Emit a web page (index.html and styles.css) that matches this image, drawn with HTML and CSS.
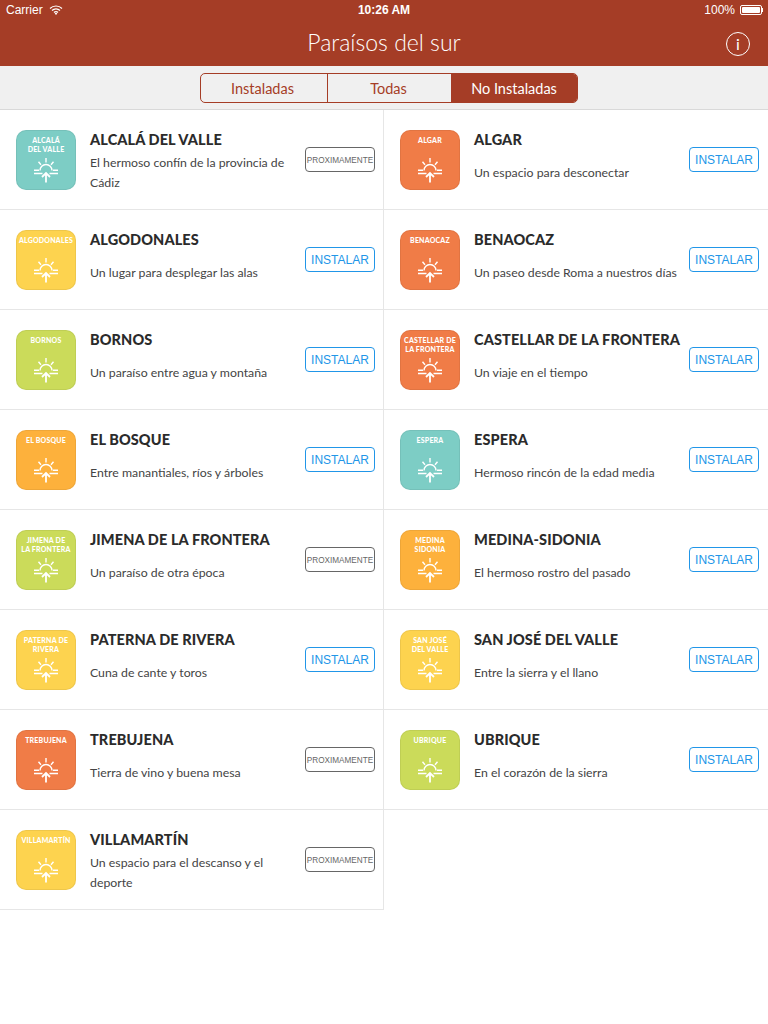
FILE: index.html
```html
<!DOCTYPE html>
<html lang="es">

<head>
    <meta charset="UTF-8">
    <meta name="viewport" content="width=device-width, initial-scale=1.0">
    <title>Paraísos del sur</title>
    <link rel="stylesheet" href="styles.css">
</head>

<body>

    <svg class="defs" width="0" height="0">
        <symbol id="sun" viewBox="0 0 60 60">
            <g fill="none" stroke="#fff" stroke-width="1.4">
                <path d="M24 40.500a6 6 0 0 1 12 0" />
                <path d="M30 28v4.500M22.500 31.800l2.500 3M37.500 31.800l-2.500 3M18 40.300h5M37 40.300h5M18 43.500h8.500M33.500 43.500H42" />
                <path d="M30 52.500V43.500M26 47l4-4 4 4" stroke-width="1.800" />
            </g>
        </symbol>
    </svg>

    <header class="top">
        <div class="status">
            <div class="status-left">
                <span>Carrier</span>
                <svg class="wifi" width="14" height="10" viewBox="0 0 14 10">
                    <path d="M1 3.500a8.500 8.500 0 0 1 12 0M3 5.500a5.600 5.600 0 0 1 8 0M5 7.500a2.800 2.800 0 0 1 4 0" fill="none" stroke="#fff" stroke-width="1.200" />
                    <path d="M7 10L5.700 8.500a1.800 1.800 0 0 1 2.600 0z" fill="#fff" />
                </svg>
            </div>
            <div class="status-time">10:26 AM</div>
            <div class="status-right">
                <span>100%</span>
                <div class="battery"><div class="battery-fill"></div></div>
                <div class="battery-tip"></div>
            </div>
        </div>
        <div class="navbar">
            <h1>Paraísos del sur</h1>
            <div class="info">i</div>
        </div>
    </header>

    <div class="segment-bar">
        <div class="segment">
            <div class="segment-item first">Instaladas</div>
            <div class="segment-item middle">Todas</div>
            <div class="segment-item selected">No Instaladas</div>
        </div>
    </div>

    <div class="list">

        <div class="cell">
            <div class="badge teal"><span>Alcalá<br>del Valle</span><svg><use href="#sun" /></svg></div>
            <div class="text">
                <h2>ALCALÁ DEL VALLE</h2>
                <div class="desc"><p>El hermoso confín de la provincia de Cádiz</p></div>
            </div>
            <div class="btn soon">PROXIMAMENTE</div>
        </div>

        <div class="cell">
            <div class="badge orange"><span>Algar</span><svg><use href="#sun" /></svg></div>
            <div class="text">
                <h2>ALGAR</h2>
                <div class="desc"><p>Un espacio para desconectar</p></div>
            </div>
            <div class="btn">INSTALAR</div>
        </div>

        <div class="cell">
            <div class="badge yellow"><span>Algodonales</span><svg><use href="#sun" /></svg></div>
            <div class="text">
                <h2>ALGODONALES</h2>
                <div class="desc"><p>Un lugar para desplegar las alas</p></div>
            </div>
            <div class="btn">INSTALAR</div>
        </div>

        <div class="cell">
            <div class="badge orange"><span>Benaocaz</span><svg><use href="#sun" /></svg></div>
            <div class="text">
                <h2>BENAOCAZ</h2>
                <div class="desc"><p>Un paseo desde Roma a nuestros días</p></div>
            </div>
            <div class="btn">INSTALAR</div>
        </div>

        <div class="cell">
            <div class="badge green"><span>Bornos</span><svg><use href="#sun" /></svg></div>
            <div class="text">
                <h2>BORNOS</h2>
                <div class="desc"><p>Un paraíso entre agua y montaña</p></div>
            </div>
            <div class="btn">INSTALAR</div>
        </div>

        <div class="cell">
            <div class="badge orange"><span>Castellar de<br>la Frontera</span><svg><use href="#sun" /></svg></div>
            <div class="text">
                <h2>CASTELLAR DE LA FRONTERA</h2>
                <div class="desc"><p>Un viaje en el tiempo</p></div>
            </div>
            <div class="btn">INSTALAR</div>
        </div>

        <div class="cell">
            <div class="badge amber"><span>El Bosque</span><svg><use href="#sun" /></svg></div>
            <div class="text">
                <h2>EL BOSQUE</h2>
                <div class="desc"><p>Entre manantiales, ríos y árboles</p></div>
            </div>
            <div class="btn">INSTALAR</div>
        </div>

        <div class="cell">
            <div class="badge teal"><span>Espera</span><svg><use href="#sun" /></svg></div>
            <div class="text">
                <h2>ESPERA</h2>
                <div class="desc"><p>Hermoso rincón de la edad media</p></div>
            </div>
            <div class="btn">INSTALAR</div>
        </div>

        <div class="cell">
            <div class="badge green"><span>Jimena de<br>la Frontera</span><svg><use href="#sun" /></svg></div>
            <div class="text">
                <h2>JIMENA DE LA FRONTERA</h2>
                <div class="desc"><p>Un paraíso de otra época</p></div>
            </div>
            <div class="btn soon">PROXIMAMENTE</div>
        </div>

        <div class="cell">
            <div class="badge amber"><span>Medina<br>Sidonia</span><svg><use href="#sun" /></svg></div>
            <div class="text">
                <h2>MEDINA-SIDONIA</h2>
                <div class="desc"><p>El hermoso rostro del pasado</p></div>
            </div>
            <div class="btn">INSTALAR</div>
        </div>

        <div class="cell">
            <div class="badge yellow"><span>Paterna de<br>Rivera</span><svg><use href="#sun" /></svg></div>
            <div class="text">
                <h2>PATERNA DE RIVERA</h2>
                <div class="desc"><p>Cuna de cante y toros</p></div>
            </div>
            <div class="btn">INSTALAR</div>
        </div>

        <div class="cell">
            <div class="badge yellow"><span>San José<br>del Valle</span><svg><use href="#sun" /></svg></div>
            <div class="text">
                <h2>SAN JOSÉ DEL VALLE</h2>
                <div class="desc"><p>Entre la sierra y el llano</p></div>
            </div>
            <div class="btn">INSTALAR</div>
        </div>

        <div class="cell">
            <div class="badge orange"><span>Trebujena</span><svg><use href="#sun" /></svg></div>
            <div class="text">
                <h2>TREBUJENA</h2>
                <div class="desc"><p>Tierra de vino y buena mesa</p></div>
            </div>
            <div class="btn soon">PROXIMAMENTE</div>
        </div>

        <div class="cell">
            <div class="badge green"><span>Ubrique</span><svg><use href="#sun" /></svg></div>
            <div class="text">
                <h2>UBRIQUE</h2>
                <div class="desc"><p>En el corazón de la sierra</p></div>
            </div>
            <div class="btn">INSTALAR</div>
        </div>

        <div class="cell">
            <div class="badge yellow"><span>Villamartín</span><svg><use href="#sun" /></svg></div>
            <div class="text">
                <h2>VILLAMARTÍN</h2>
                <div class="desc"><p>Un espacio para el descanso y el deporte</p></div>
            </div>
            <div class="btn soon">PROXIMAMENTE</div>
        </div>

    </div>

</body>

</html>
```

FILE: styles.css
```css
body {
    font-family: 'Lato', sans-serif;
    margin: 0;
    padding: 0;
    background-color: #fff;
    color: #333;
}

.defs {
    display: block;
    height: 0;
}

.top {
    background-color: #a53d26;
    color: #fff;
    height: 66px;
}

.status {
    display: grid;
    grid-template-columns: 1fr auto 1fr;
    align-items: center;
    height: 20px;
    padding: 0 6px;
    font-family: 'Liberation Sans', sans-serif;
    font-size: 12px;
}

.status-left {
    display: flex;
    align-items: center;
    gap: 6px;
}

.status-time {
    font-weight: bold;
}

.status-right {
    display: flex;
    align-items: center;
    justify-content: flex-end;
    margin-right: -1px;
}

.battery {
    width: 22px;
    height: 10px;
    box-sizing: border-box;
    margin-left: 5px;
    padding: 1px;
    border: 1px solid #fff;
    border-radius: 2px;
}

.battery-fill {
    height: 100%;
    background-color: #fff;
    border-radius: 1px;
}

.battery-tip {
    width: 1px;
    height: 4px;
    background-color: #fff;
}

.navbar {
    display: flex;
    align-items: center;
    justify-content: center;
    position: relative;
    height: 46px;
}

.navbar h1 {
    margin: 0 0 2px;
    font-size: 23px;
    font-weight: 300;
}

.info {
    position: absolute;
    top: 12px;
    right: 18px;
    width: 22px;
    height: 22px;
    border: 1px solid #fff;
    border-radius: 50%;
    font-size: 16px;
    font-weight: 400;
    line-height: 22px;
    text-align: center;
}

.segment-bar {
    display: flex;
    box-sizing: border-box;
    height: 44px;
    padding: 7px 0 0 200px;
    background-color: #f0f0f0;
    border-bottom: 1px solid #d9d9d9;
}

.segment {
    display: flex;
    width: 378px;
    height: 30px;
    box-sizing: border-box;
    border: 1px solid #a53d26;
    border-radius: 5px;
    overflow: hidden;
}

.segment-item {
    box-sizing: border-box;
    width: 126px;
    font-size: 14.500px;
    line-height: 29px;
    text-align: center;
    color: #a53d26;
}

.segment-item.first {
    padding-right: 3px;
}

.segment-item.middle {
    width: 124px;
    padding-right: 2px;
    border-left: 1px solid #a53d26;
}

.segment-item.selected {
    background-color: #a53d26;
    color: #fff;
}

.list {
    display: grid;
    grid-template-columns: 384px 384px;
}

.cell {
    display: flex;
    align-items: center;
    box-sizing: border-box;
    height: 100px;
    padding: 0 9px 0 16px;
    border-bottom: 1px solid #e6e6e6;
}

.cell:nth-child(odd) {
    padding-right: 8px;
    border-right: 1px solid #e6e6e6;
}

.badge {
    flex: none;
    position: relative;
    width: 60px;
    height: 60px;
    box-sizing: border-box;
    padding-top: 6px;
    border-radius: 10px;
    box-shadow: inset 0 0 0 1px rgba(0, 0, 0, 0.06);
    color: #fff;
    font-size: 7px;
    font-weight: 900;
    line-height: 9px;
    letter-spacing: 0.2px;
    text-align: center;
    text-transform: uppercase;
}

.badge span {
    display: block;
}

.badge svg {
    position: absolute;
    top: 0;
    left: 0;
    width: 60px;
    height: 60px;
}

.teal {
    background-color: #7dcdc5;
}

.orange {
    background-color: #f07c47;
}

.yellow {
    background-color: #fdd34f;
}

.green {
    background-color: #cbdb5a;
}

.amber {
    background-color: #fdb13c;
}

.text {
    flex: 1;
    min-width: 0;
    margin-left: 14px;
    align-self: flex-start;
    padding-top: 20px;
}

.text h2 {
    margin: 0;
    font-size: 14.500px;
    font-weight: 900;
    line-height: 20px;
    letter-spacing: 0.1px;
    color: #2b2b2b;
    white-space: nowrap;
}

.desc {
    display: flex;
    align-items: center;
    height: 40px;
    margin-top: 3px;
}

.desc p {
    margin: 0;
    font-size: 12.300px;
    line-height: 20px;
    color: #444;
}

.btn {
    flex: none;
    width: 70px;
    height: 25px;
    box-sizing: border-box;
    margin-left: 10px;
    border: 1px solid #2196e8;
    border-radius: 4px;
    font-family: 'Liberation Sans', sans-serif;
    font-size: 12px;
    line-height: 25px;
    text-align: center;
    color: #2196e8;
}

.btn.soon {
    border-color: #666;
    color: #666;
    font-size: 8.200px;
}
```
